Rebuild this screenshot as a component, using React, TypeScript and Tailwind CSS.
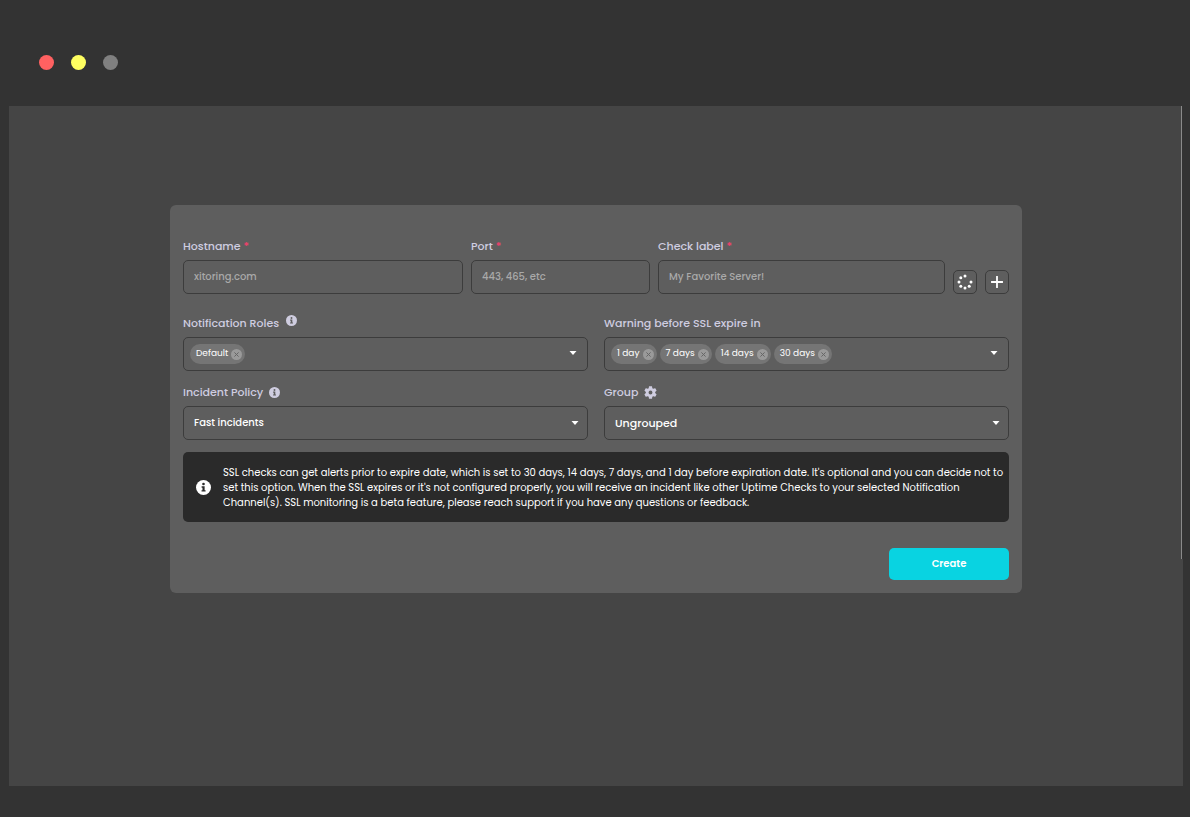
import { useState, type ReactNode } from 'react'

const FIELD = 'h-[34px] w-full rounded-[5px] border border-[#3c3c3c] bg-transparent outline-none'
const LABEL = 'text-[11px] font-medium leading-5 text-[#cfcde0]'

function InfoIcon({ className, hole }: { className: string; hole: string }) {
  return (
    <svg viewBox="0 0 16 16" className={className} aria-hidden="true">
      <circle cx="8" cy="8" r="8" fill="currentColor" />
      <circle cx="8" cy="4.3" r="1.4" fill={hole} />
      <path d="M6 6.7h3.2v4.1h1v1.5H5.9v-1.5h1V8.2H6z" fill={hole} />
    </svg>
  )
}

function GearIcon() {
  return (
    <svg viewBox="2 2 20 20" className="size-[13px]" aria-hidden="true">
      <path
        fill="currentColor"
        fillRule="evenodd"
        d="M19.14 12.94c.04-.3.06-.61.06-.94 0-.32-.02-.64-.07-.94l2.03-1.58c.18-.14.23-.41.12-.61l-1.92-3.32c-.12-.22-.37-.29-.59-.22l-2.39.96c-.5-.38-1.03-.7-1.62-.94l-.36-2.54c-.04-.24-.24-.41-.48-.41h-3.84c-.24 0-.43.17-.47.41l-.36 2.54c-.59.24-1.13.57-1.62.94l-2.39-.96c-.22-.08-.47 0-.59.22L2.74 8.87c-.12.21-.08.47.12.61l2.03 1.58c-.05.3-.09.63-.09.94s.02.64.07.94l-2.03 1.58c-.18.14-.23.41-.12.61l1.92 3.32c.12.22.37.29.59.22l2.39-.96c.5.38 1.03.7 1.62.94l.36 2.54c.05.24.24.41.48.41h3.84c.24 0 .44-.17.47-.41l.36-2.54c.59-.24 1.13-.56 1.62-.94l2.39.96c.22.08.47 0 .59-.22l1.92-3.32c.12-.22.07-.47-.12-.61l-2.01-1.58zM12 15a3 3 0 1 1 0-6 3 3 0 0 1 0 6z"
      />
    </svg>
  )
}

function Caret() {
  return (
    <svg viewBox="0 0 8 4" className="h-1 w-2 text-white" aria-hidden="true">
      <path d="M0.5 0h7L4 4z" fill="currentColor" />
    </svg>
  )
}

// ring of dots with the upper right one missing
function DotsIcon() {
  const dots = [[8, 2], [14, 8], [12.2, 12.2], [8, 14], [3.8, 12.2], [2, 8], [3.8, 3.8]]
  return (
    <svg viewBox="0 0 16 16" className="size-4 text-white" aria-hidden="true">
      {dots.map(([cx, cy]) => <circle key={`${cx}-${cy}`} cx={cx} cy={cy} r="1.5" fill="currentColor" />)}
    </svg>
  )
}

function TextField({ id, label, placeholder }: { id: string; label: string; placeholder: string }) {
  return (
    <div className="flex min-w-0 flex-col gap-1">
      <label htmlFor={id} className={LABEL}>
        {label} <span className="text-[#f1416c]">*</span>
      </label>
      <input
        id={id}
        type="text"
        placeholder={placeholder}
        className={`${FIELD} px-2.5 text-[10px] font-medium text-white placeholder:text-[#a9a9a9]`}
      />
    </div>
  )
}

function ChipField({ id, initial, children }: { id: string; initial: string[]; children: ReactNode }) {
  const [items, setItems] = useState(initial)
  return (
    <div className="flex min-w-0 flex-col gap-1">
      <div id={id} className={`${LABEL} flex items-start gap-[7px]`}>{children}</div>
      <div role="group" aria-labelledby={id} className={`${FIELD} flex items-center justify-between pl-1.5 pr-2.5`}>
        <div className="flex gap-[3px]">
          {items.map(item => (
            <span key={item} className="flex h-5 items-center gap-[3px] rounded-full bg-[#757575] pl-1.5 pr-[3px] text-[9px] text-white">
              {item}
              <button
                type="button"
                aria-label={`Remove ${item}`}
                onClick={() => setItems(prev => prev.filter(i => i !== item))}
                className="flex size-[11px] items-center justify-center rounded-full bg-[#9a9a9a] text-[#666]"
              >
                <svg viewBox="0 0 6 6" className="size-[5px]" aria-hidden="true">
                  <path d="M0.5 0.5l5 5M5.5 0.5l-5 5" stroke="currentColor" strokeWidth="1.2" />
                </svg>
              </button>
            </span>
          ))}
        </div>
        <button type="button" aria-label="Open options" className="pb-0.5"><Caret /></button>
      </div>
    </div>
  )
}

function SelectField({ id, label, option, icon, textClass }: {
  id: string
  label: string
  option: string
  icon: ReactNode
  textClass: string
}) {
  return (
    <div className="flex min-w-0 flex-col gap-1">
      <div className="flex items-center gap-1.5 text-[#cfcde0]">
        <label htmlFor={id} className={LABEL}>{label}</label>
        {icon}
      </div>
      <div className="relative">
        <select id={id} className={`${FIELD} ${textClass} appearance-none px-2.5 font-medium text-white`}>
          <option>{option}</option>
        </select>
        <span className="pointer-events-none absolute inset-y-0 right-[9px] flex items-center"><Caret /></span>
      </div>
    </div>
  )
}

export default function App() {
  return (
    <div className="flex min-h-screen flex-col bg-[#333] pb-[31px] pl-[9px] pr-[7px] font-['Poppins','Inter',sans-serif]">
      <header className="flex h-[106px] items-start gap-[17px] pl-[30px] pt-[55px]">
        <span className="size-[15px] rounded-full bg-[#ff6161]" />
        <span className="size-[15px] rounded-full bg-[#ffff61]" />
        <span className="size-[15px] rounded-full bg-[#808080]" />
      </header>

      <main className="relative flex flex-1 flex-col items-center bg-[#454545] px-4 pt-[99px]">
        <div className="absolute right-0 top-0 h-2/3 w-0.5 border-l border-[#8a8a8a] bg-[#333]" />

        <form
          onSubmit={e => e.preventDefault()}
          className="flex w-full max-w-[852px] flex-col rounded-md bg-[#5e5e5e] px-[13px] pb-[13px] pt-[31px]"
        >
          <div className="grid grid-cols-[280fr_179fr_287fr_24px_24px] items-end gap-2">
            <TextField id="hostname" label="Hostname" placeholder="xitoring.com" />
            <TextField id="port" label="Port" placeholder="443, 465, etc" />
            <TextField id="check-label" label="Check label" placeholder="My Favorite Server!" />
            <button type="button" aria-label="Generate label" className="flex size-6 items-center justify-center rounded-[5px] border border-[#3c3c3c]">
              <DotsIcon />
            </button>
            <button type="button" aria-label="Add check" className="flex size-6 items-center justify-center rounded-[5px] border border-[#3c3c3c]">
              <svg viewBox="0 0 12 12" className="size-3 text-white" aria-hidden="true">
                <path d="M6 0.5v11M0.5 6h11" stroke="currentColor" strokeWidth="1.8" strokeLinecap="round" />
              </svg>
            </button>
          </div>

          <div className="mt-[19px] grid grid-cols-2 gap-x-4 gap-y-[11px]">
            <ChipField id="roles" initial={['Default']}>
              Notification Roles <InfoIcon className="mt-0.5 size-[11px]" hole="#5e5e5e" />
            </ChipField>
            <ChipField id="warning" initial={['1 day', '7 days', '14 days', '30 days']}>
              Warning before SSL expire in
            </ChipField>
            <SelectField
              id="policy"
              label="Incident Policy"
              option="Fast incidents"
              textClass="pb-0.5 text-[10px]"
              icon={<InfoIcon className="size-[11px]" hole="#5e5e5e" />}
            />
            <SelectField id="group" label="Group" option="Ungrouped" textClass="text-[11px]" icon={<GearIcon />} />
          </div>

          <div className="mt-3 flex min-h-[70px] items-center gap-3 rounded-[5px] bg-[#2a2a2a] pl-[13px] pr-1">
            <InfoIcon className="size-[15px] shrink-0 text-white" hole="#2a2a2a" />
            <p className="text-[10px] leading-[15px] text-white">
              SSL checks can get alerts prior to expire date, which is set to 30 days, 14 days, 7 days, and 1 day before
              expiration date. It's optional and you can decide not to set this option. When the SSL expires or it's not
              configured properly, you will receive an incident like other Uptime Checks to your selected Notification
              Channel(s). SSL monitoring is a beta feature, please reach support if you have any questions or feedback.
            </p>
          </div>

          <button type="submit" className="mt-[26px] h-8 w-[120px] self-end rounded-[5px] bg-[#09d3e1] pb-0.5 text-[10px] font-semibold text-white">
            Create
          </button>
        </form>
      </main>
    </div>
  )
}
